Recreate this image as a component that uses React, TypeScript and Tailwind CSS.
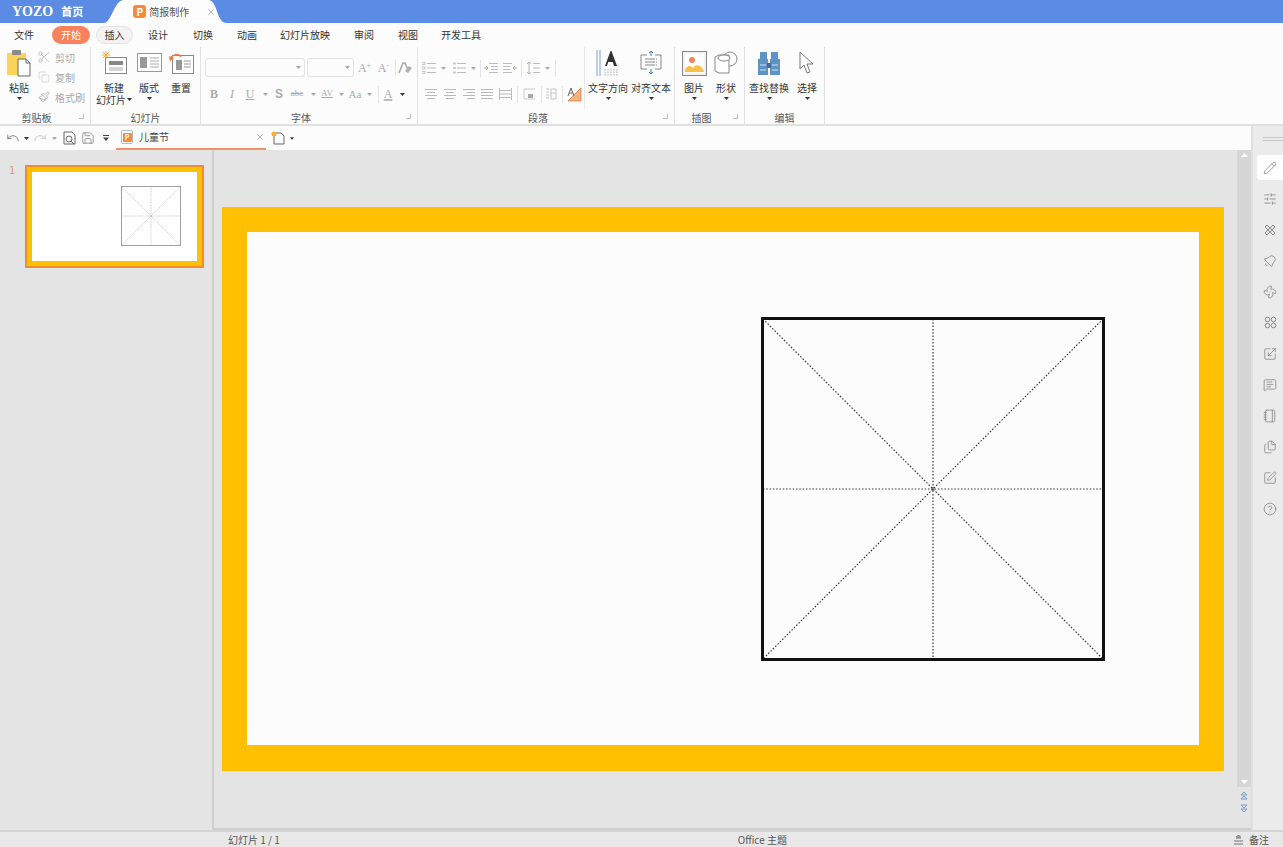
import React from "react";
import {
  Pencil, SlidersHorizontal, Fan, MessageSquareText, Files, SquarePen, CircleHelp, Scissors, Copy, Paintbrush, X, Undo, Redo, Save, Bell, Scaling, Notebook,
} from "lucide-react";

const Caret = ({ className = "" }: { className?: string }) => (
  <svg width="5" height="3" viewBox="0 0 5 3" className={className}><path d="M0 0h5L2.5 3z" fill="#333" /></svg>
);
const GrayCaret = () => (
  <svg width="5" height="3" viewBox="0 0 5 3"><path d="M0 0h5L2.5 3z" fill="#aaa" /></svg>
);

const Launcher = () => (
  <svg width="5" height="5" viewBox="0 0 5 5" className="absolute right-[6px] bottom-[5px]"><path d="M4.5 0v4.5H0" stroke="#bbb" fill="none" /></svg>
);

const Lines = ({ rows, w = 12 }: { rows: [number, number][]; w?: number }) => (
  <svg width={w} height="12" viewBox={`0 0 ${w} 12`}>
    {rows.map(([a, b], i) => (
      <path key={i} d={`M${a} ${1.5 + (i * 9) / (rows.length - 1)}H${b}`} stroke="#b8b8b8" />
    ))}
  </svg>
);

const PBadge = ({ size }: { size: "s" | "l" }) =>
  size === "l" ? (
    <div className="flex h-[13px] w-[13px] items-center justify-center rounded-[3px] bg-[#f58a3c] text-[10px] font-bold leading-none text-white">P</div>
  ) : (
    <div className="flex h-[14px] w-[12px] items-center justify-center rounded-[2px] border border-[#bbb] bg-white">
      <div className="flex h-[9px] w-[9px] items-center justify-center rounded-[1px] bg-[#f58a3c] text-[7px] font-bold leading-none text-white">P</div>
    </div>
  );

const tabs = [
  { t: "文件", c: "ml-[4px] w-[40px]" },
  { t: "开始", c: "ml-[8px] w-[38px] h-[18px] rounded-full bg-[#f9825c] text-white" },
  { t: "插入", c: "ml-[6px] w-[37px] h-[18px] rounded-full border border-[#e4e4e4] bg-[#f3f3f3]" },
  { t: "设计", c: "ml-[5px] w-[40px]" },
  { t: "切换", c: "ml-[5px] w-[40px]" },
  { t: "动画", c: "ml-[4px] w-[40px]" },
  { t: "幻灯片放映", c: "ml-[8px] w-[60px]" },
  { t: "审阅", c: "ml-[9px] w-[40px]" },
  { t: "视图", c: "ml-[4px] w-[40px]" },
  { t: "开发工具", c: "ml-[8px] w-[50px]" },
];

const Group = ({ label, className, labelClass = "", children, launcher }: { label: string; className: string; labelClass?: string; children: React.ReactNode; launcher?: boolean }) => (
  <div className={`relative flex h-full shrink-0 flex-col border-r border-[#e2e2e2] ${className}`}>
    <div className="flex h-[64px] items-start">{children}</div>
    <div className={`text-center text-[10px] leading-[13px] text-[#555] ${labelClass}`}>{label}</div>
    {launcher && <Launcher />}
  </div>
);

const Big = ({ icon, label, label2, caret = true, className }: { icon: React.ReactNode; label: string; label2?: React.ReactNode; caret?: boolean; className: string }) => (
  <div className={`flex shrink-0 flex-col items-center ${className}`}>
    <div className="flex h-[32px] items-center justify-center">{icon}</div>
    <div className="mt-[3px] whitespace-nowrap text-[10px] leading-[12px] text-[#333]">{label}</div>
    {label2 ? (
      <div className="whitespace-nowrap text-[10px] leading-[11px] text-[#333]">{label2}</div>
    ) : caret ? (
      <Caret className="mt-[3px]" />
    ) : null}
  </div>
);

const SmallTool = ({ icon, label }: { icon: React.ReactNode; label: string }) => (
  <div className="flex h-[20px] items-center text-[10px] text-[#aaa]">
    <span className="flex w-[20px] justify-center">{icon}</span>
    <span className="ml-[1px] whitespace-nowrap">{label}</span>
  </div>
);

const Slot = ({ w, children }: { w: string; children: React.ReactNode }) => (
  <div className={`flex shrink-0 items-center justify-center ${w}`}>{children}</div>
);
const VSep = () => <div className="h-[17px] w-px bg-[#e4e4e4]" />;

const Mi = ({ c = "", children }: { c?: string; children: React.ReactNode }) => (
  <span className={`font-['Liberation_Serif',serif] text-[#aaa] ${c}`}>{children}</span>
);

const PasteIcon = () => (
  <svg width="26" height="28" viewBox="0 0 26 28">
    <rect x="1" y="4" width="19" height="22" rx="1" fill="#fbd25a" />
    <rect x="6" y="1" width="9" height="5" rx="1" fill="#8a8a8a" />
    <path d="M12 10h8l4 4v13H12z" fill="#fff" stroke="#666" />
    <path d="M20 10v4h4" fill="none" stroke="#666" />
  </svg>
);
const NewSlideIcon = () => (
  <svg width="27" height="24" viewBox="0 0 27 24">
    <rect x="4.5" y="6.5" width="21" height="16" fill="#fff" stroke="#888" />
    <rect x="8" y="10" width="14" height="4" fill="#888" />
    <path d="M8 17h14M8 19h14" stroke="#aaa" />
    <path d="M5 0v8M1 4h8M2 1l6 6M8 1L2 7" stroke="#f3b14a" />
  </svg>
);
const LayoutIcon = () => (
  <svg width="25" height="20" viewBox="0 0 25 20">
    <rect x=".5" y=".5" width="24" height="18" fill="#fff" stroke="#999" />
    <rect x="3" y="4" width="7" height="11" fill="#999" />
    <path d="M13 5h9M13 8h9M13 11h9M13 14h9" stroke="#aaa" />
  </svg>
);
const ResetIcon = () => (
  <svg width="25" height="22" viewBox="0 0 25 22">
    <rect x="3.5" y="3.5" width="21" height="18" fill="#fff" stroke="#888" />
    <rect x="7" y="8" width="6" height="10" fill="#999" />
    <path d="M15 9h7M15 12h7M15 15h7" stroke="#999" />
    <path d="M1 8C3 2 10 1 12 5" stroke="#f0784a" strokeWidth="1.6" fill="none" />
    <path d="M0 4l1 5 4-3z" fill="#f0784a" />
  </svg>
);
const TextDirIcon = () => (
  <svg width="24" height="26" viewBox="0 0 24 26">
    <path d="M1 0v26M4 0v26" stroke="#7fa0c4" />
    <path d="M9 16L14.5 1h1L21 16h-3l-1.2-4h-4.6L11 16z" fill="#333" />
    <path d="M9 19v7M12 19v7M15 19v7M18 19v7M21 19v7" stroke="#aaa" strokeDasharray="1.5 1" />
  </svg>
);
const AlignTextIcon = () => (
  <svg width="22" height="24" viewBox="0 0 22 24">
    <path d="M7 4H1v14h6M15 4h6v14h-6" stroke="#888" fill="none" />
    <path d="M5 8h12M5 11h12M5 14h12" stroke="#888" strokeDasharray="10 1 1" />
    <path d="M11 0v5M11 18v5M9 2l2-2 2 2M9 21l2 2 2-2" stroke="#3a7cb8" fill="none" />
  </svg>
);
const PictureIcon = () => (
  <svg width="25" height="25" viewBox="0 0 25 25">
    <rect x=".5" y=".5" width="24" height="24" fill="#f2f2f2" stroke="#888" />
    <rect x="3" y="3" width="19" height="19" fill="#fff" />
    <circle cx="10" cy="9" r="3" fill="#f5845a" />
    <path d="M3 20c1-6 6-6 8-3 2-4 8-4 11 3v1H3z" fill="#f7c04a" />
  </svg>
);
const ShapeIcon = () => (
  <svg width="24" height="24" viewBox="0 0 24 24">
    <circle cx="16" cy="8" r="7" fill="#fff" stroke="#888" />
    <path d="M1 6l4-2h10v18H5l-4-2z" fill="#fff" stroke="#888" />
    <ellipse cx="10" cy="7" rx="6" ry="3" fill="#fff" stroke="#888" />
  </svg>
);
const FindIcon = () => (
  <svg width="24" height="25" viewBox="0 0 24 25">
    <rect x="3" y="1" width="7" height="7" fill="#5f93c4" />
    <rect x="14" y="1" width="7" height="7" fill="#5f93c4" />
    <rect x="1" y="8" width="10" height="16" fill="#5f93c4" />
    <rect x="13" y="8" width="10" height="16" fill="#5f93c4" />
    <rect x="10" y="12" width="4" height="5" fill="#3e6e9e" />
    <path d="M3 14h6M15 14h6M3 19h6M15 19h6" stroke="#cfe0f0" />
  </svg>
);
const CursorIcon = () => (
  <svg width="16" height="24" viewBox="0 0 16 24">
    <path d="M1 1v17l4-4 3 8 3-1-3-8h6z" fill="#fff" stroke="#777" />
  </svg>
);
const ListIcon = ({ num }: { num?: boolean }) => (
  <svg width="14" height="12" viewBox="0 0 14 12">
    {[1.5, 6, 10.5].map((y) => (
      <g key={y}>
        <rect x={num ? 1 : 0} y={y - 1} width="3" height="2" fill={num ? "#ccc" : "none"} stroke="#bbb" strokeWidth={num ? 0 : 0.8} />
        <path d={`M5 ${y}H14`} stroke="#bbb" />
      </g>
    ))}
  </svg>
);
const IndentIcon = ({ flip }: { flip?: boolean }) => (
  <svg width="14" height="12" viewBox="0 0 14 12" className={flip ? "-scale-x-100" : ""}>
    <path d="M5 1.5h9M7 4.5h7M7 7.5h7M5 10.5h9" stroke="#bbb" />
    <path d="M0 6h4M2 4l2 2-2 2" stroke="#b5a98c" fill="none" />
  </svg>
);
const LineSpaceIcon = () => (
  <svg width="14" height="14" viewBox="0 0 14 14">
    <path d="M3 1v12M1 3l2-2 2 2M1 11l2 2 2-2" stroke="#b5b5b5" fill="none" />
    <path d="M7 2.5h7M7 7h7M7 11.5h7" stroke="#bbb" />
  </svg>
);

const CrossTool = () => (
  <svg width="14" height="14" viewBox="0 0 14 14">
    <path d="M2 4L4 2l8 8-2 2zM10 2l2 2-8 8-2-2z" fill="none" stroke="#888" />
  </svg>
);
const FourDots = () => (
  <svg width="13" height="13" viewBox="0 0 13 13">
    {[[3.5, 3.5], [9.5, 3.5], [3.5, 9.5], [9.5, 9.5]].map(([x, y]) => (
      <circle key={`${x}${y}`} cx={x} cy={y} r="2.3" fill="none" stroke="#888" />
    ))}
  </svg>
);
const DoubleChev = ({ flip }: { flip?: boolean }) => (
  <svg width="8" height="9" viewBox="0 0 8 9" className={flip ? "-scale-y-100" : ""}>
    <path d="M1 4l3-3 3 3zM1 8l3-3 3 3z" fill="none" stroke="#6f9ad0" />
  </svg>
);

const sideIcon = "h-[14px] w-[14px] text-[#888]";
const side: React.ReactNode[] = [
  <SlidersHorizontal className={sideIcon} strokeWidth={1.4} />,
  <CrossTool />,
  <Bell className={`${sideIcon} rotate-45`} strokeWidth={1.4} />,
  <Fan className={sideIcon} strokeWidth={1.4} />,
  <FourDots />,
  <Scaling className={sideIcon} strokeWidth={1.4} />,
  <MessageSquareText className={sideIcon} strokeWidth={1.4} />,
  <Notebook className={sideIcon} strokeWidth={1.4} />,
  <Files className={sideIcon} strokeWidth={1.4} />,
  <SquarePen className={sideIcon} strokeWidth={1.4} />,
  <CircleHelp className={sideIcon} strokeWidth={1.4} />,
];

const MiGrid = ({ size, stroke, dash, line, frame }: { size: number; stroke: number; dash: string; line: string; frame: string }) => (
  <svg width={size} height={size} viewBox="0 0 344 344" className="block">
    <g stroke={line} strokeWidth={size > 100 ? 1.2 : 3} strokeDasharray={dash} fill="none">
      <path d="M2 2L342 342M342 2L2 342M172 2V342M2 172H342" />
    </g>
    <rect x={stroke / 2} y={stroke / 2} width={344 - stroke} height={344 - stroke} fill="none" stroke={frame} strokeWidth={stroke} />
  </svg>
);

export default function App() {
  return (
    <div className="flex h-[847px] w-[1283px] flex-col overflow-hidden bg-[#e4e4e4] font-['Noto_Sans_CJK_SC','Liberation_Sans',sans-serif] text-[10px] text-[#333]">
      {/* Title bar */}
      <div className="relative flex h-[23px] shrink-0 items-center bg-[#5b8be2] text-white">
        <span className="ml-[12px] font-['Liberation_Serif',serif] text-[14px] font-bold leading-none">YOZO</span>
        <span className="ml-[8px] text-[11px] font-bold leading-none">首页</span>
        <div className="relative ml-[21px] flex h-[23px] w-[122px] items-center">
          <svg width="122" height="23" viewBox="0 0 122 23" className="absolute left-0 top-0">
            <path d="M0 23C8 22 10 0 20 0H104C114 0 112 22 122 23Z" fill="#fdfdfd" />
          </svg>
          <div className="relative ml-[29px] flex items-center text-[#555]">
            <PBadge size="l" />
            <span className="ml-[3px] text-[10px] leading-none">简报制作</span>
            <X className="ml-[17px] h-[10px] w-[10px] text-[#777]" strokeWidth={1.3} />
          </div>
        </div>
      </div>

      {/* Menu */}
      <div className="flex h-[24px] shrink-0 items-center bg-[#fcfcfc]">
        {tabs.map((t) => (
          <div key={t.t} className={`flex shrink-0 items-center justify-center leading-none ${t.c}`}>{t.t}</div>
        ))}
      </div>

      {/* Ribbon */}
      <div className="flex h-[79px] shrink-0 border-b-2 border-[#e0e0e0] bg-[#fcfcfc]">
        <Group label="剪贴板" className="w-[91px]" labelClass="pr-[17px]" launcher>
          <Big icon={<PasteIcon />} label="粘贴" className="ml-[6px] w-[26px]" />
          <div className="ml-[2px] flex flex-col">
            <SmallTool icon={<Scissors className="h-[14px] w-[14px] text-[#aaa]" strokeWidth={1.2} />} label="剪切" />
            <SmallTool icon={<Copy className="h-[12px] w-[12px] text-[#c4c4c4]" strokeWidth={1.2} />} label="复制" />
            <SmallTool icon={<Paintbrush className="h-[12px] w-[12px] text-[#aaa]" strokeWidth={1.6} />} label="格式刷" />
          </div>
        </Group>
        <Group label="幻灯片" className="w-[110px]">
          <Big icon={<NewSlideIcon />} label="新建" label2={<span className="flex items-center">幻灯片<Caret className="ml-[1px]" /></span>} className="ml-[7px] w-[32px]" />
          <Big icon={<LayoutIcon />} label="版式" className="ml-[3px] w-[32px]" />
          <Big icon={<ResetIcon />} label="重置" caret={false} className="w-[32px]" />
        </Group>
        <Group label="字体" className="w-[217px]" labelClass="pr-[16px]" launcher>
          <div className="ml-[4px] mt-[11px] flex flex-col">
            <div className="flex h-[19px] items-center">
              <div className="flex h-[19px] w-[100px] items-center justify-end rounded-[3px] border border-[#e2e2e2] pr-[3px]"><GrayCaret /></div>
              <div className="ml-[2px] flex h-[19px] w-[47px] items-center justify-end rounded-[3px] border border-[#e2e2e2] pr-[3px]"><GrayCaret /></div>
              <Slot w="w-[19px] ml-[1px]"><Mi c="text-[12px]">A<sup className="text-[8px]">+</sup></Mi></Slot>
              <Slot w="w-[19px]"><Mi c="text-[12px]">A<sup className="text-[8px]">-</sup></Mi></Slot>
              <Slot w="w-[4px]"><VSep /></Slot>
              <Slot w="w-[16px]">
                <svg width="14" height="12" viewBox="0 0 14 12"><path d="M1 11L5 1h2l3 7" stroke="#aaa" strokeWidth="1.6" fill="none" /><path d="M7 9l4-5 3 2-4 5z" fill="#b0b0b0" /></svg>
              </Slot>
            </div>
            <div className="mt-[8px] flex h-[18px] items-center text-[12px]">
              <Slot w="w-[18px]"><Mi c="font-bold">B</Mi></Slot>
              <Slot w="w-[18px]"><Mi c="italic">I</Mi></Slot>
              <Slot w="w-[18px]"><Mi c="underline">U</Mi></Slot>
              <Slot w="w-[12px]"><GrayCaret /></Slot>
              <Slot w="w-[16px]"><span className="font-['Liberation_Sans',sans-serif] font-bold text-[#aaa]">S</span></Slot>
              <Slot w="w-[20px]"><Mi c="text-[9px] line-through">abc</Mi></Slot>
              <Slot w="w-[12px]"><GrayCaret /></Slot>
              <Slot w="w-[16px]"><Mi c="text-[9px] underline">AV</Mi></Slot>
              <Slot w="w-[12px]"><GrayCaret /></Slot>
              <Slot w="w-[16px]"><Mi c="text-[11px]">Aa</Mi></Slot>
              <Slot w="w-[12px]"><GrayCaret /></Slot>
              <Slot w="w-[6px]"><VSep /></Slot>
              <Slot w="w-[14px]"><Mi c="underline decoration-[#bbb] decoration-2">A</Mi></Slot>
              <Slot w="w-[14px]"><Caret /></Slot>
            </div>
          </div>
        </Group>
        <Group label="段落" className="w-[257px]" labelClass="pr-[16px]" launcher>
          <div className="flex h-[62px] w-[167px] shrink-0 flex-col border-r border-[#e8e8e8] pl-[4px]">
            <div className="mt-[12px] flex h-[18px] items-center">
              <Slot w="w-[14px]"><ListIcon /></Slot>
              <Slot w="w-[14px]"><GrayCaret /></Slot>
              <Slot w="w-[17px]"><ListIcon num /></Slot>
              <Slot w="w-[12px]"><GrayCaret /></Slot>
              <Slot w="w-[3px]"><VSep /></Slot>
              <Slot w="w-[18px]"><IndentIcon /></Slot>
              <Slot w="w-[20px]"><IndentIcon flip /></Slot>
              <Slot w="w-[3px]"><VSep /></Slot>
              <Slot w="w-[20px]"><LineSpaceIcon /></Slot>
              <Slot w="w-[8px]"><GrayCaret /></Slot>
              <Slot w="w-[8px]"><VSep /></Slot>
            </div>
            <div className="mt-[8px] flex h-[18px] items-center">
              <Slot w="w-[18px]"><Lines rows={[[0, 12], [2, 10], [0, 12], [2, 10]]} /></Slot>
              <Slot w="w-[19px]"><Lines rows={[[0, 12], [2, 10], [0, 12], [2, 10]]} /></Slot>
              <Slot w="w-[19px]"><Lines rows={[[0, 12], [4, 12], [0, 12], [4, 12]]} /></Slot>
              <Slot w="w-[18px]"><Lines rows={[[0, 12], [0, 12], [0, 12], [0, 12]]} /></Slot>
              <Slot w="w-[19px]">
                <svg width="13" height="12" viewBox="0 0 13 12"><path d="M.5 0v12M12.5 0v12M0 2.5h13M0 6h13M0 9.5h13" stroke="#bbb" /></svg>
              </Slot>
              <Slot w="w-[5px]"><VSep /></Slot>
              <Slot w="w-[18px]">
                <svg width="13" height="12" viewBox="0 0 13 12"><path d="M1 1h11M1 11h11M1 1v10" stroke="#ccc" /><rect x="5" y="6" width="5" height="4" fill="#aaa" /></svg>
              </Slot>
              <Slot w="w-[6px]"><VSep /></Slot>
              <Slot w="w-[14px]">
                <svg width="12" height="12" viewBox="0 0 12 12"><path d="M1 1h3M1 4h3M1 7h3M1 10h3M6 1h5v10H6zM6 5h5" stroke="#c4c4c4" fill="none" /></svg>
              </Slot>
              <Slot w="w-[9px]"><VSep /></Slot>
              <Slot w="w-[15px]">
                <svg width="15" height="15" viewBox="0 0 15 15"><path d="M1 14L14 1v13z" fill="#f4b183" stroke="#c97a3c" strokeWidth=".7" /><path d="M1 9l3-8 3 8M2.2 6h3.6" stroke="#666" fill="none" /></svg>
              </Slot>
            </div>
          </div>
          <Big icon={<TextDirIcon />} label="文字方向" className="ml-[3px] w-[40px]" />
          <Big icon={<AlignTextIcon />} label="对齐文本" className="ml-[3px] w-[40px]" />
        </Group>
        <Group label="插图" className="w-[70px]" labelClass="pr-[16px]" launcher>
          <Big icon={<PictureIcon />} label="图片" className="ml-[3px] w-[32px]" />
          <Big icon={<ShapeIcon />} label="形状" className="w-[32px]" />
        </Group>
        <Group label="编辑" className="w-[80px]">
          <Big icon={<FindIcon />} label="查找替换" className="ml-[4px] w-[40px]" />
          <Big icon={<CursorIcon />} label="选择" className="ml-[2px] w-[32px]" />
        </Group>
      </div>

      {/* Body */}
      <div className="flex min-h-0 flex-1">
        <div className="flex w-[1251px] shrink-0 flex-col">
          {/* Quick bar */}
          <div className="flex h-[24px] shrink-0 items-center bg-[#fcfcfc]">
            <Slot w="w-[20px] ml-[3px]"><Undo className="h-[14px] w-[14px] text-[#666]" strokeWidth={1.3} /></Slot>
            <Slot w="w-[7px]"><Caret /></Slot>
            <Slot w="w-[20px]"><Redo className="h-[14px] w-[14px] text-[#bbb]" strokeWidth={1.3} /></Slot>
            <Slot w="w-[9px]"><GrayCaret /></Slot>
            <Slot w="w-[20px]">
              <svg width="13" height="14" viewBox="0 0 13 14"><path d="M1 1h8l3 3v9H1z" fill="#fff" stroke="#666" /><circle cx="6" cy="8" r="3" fill="none" stroke="#666" /><path d="M8 10l3 3" stroke="#666" /></svg>
            </Slot>
            <Slot w="w-[18px]"><Save className="h-[14px] w-[14px] text-[#777]" strokeWidth={1.2} /></Slot>
            <Slot w="w-[18px]">
              <svg width="6" height="6" viewBox="0 0 6 6"><path d="M0 .5h6" stroke="#444" /><path d="M0 2.5h6L3 6z" fill="#444" /></svg>
            </Slot>
            <div className="ml-[1px] flex h-[24px] w-[150px] items-center border-b-2 border-[#f0906c] pl-[5px]">
              <PBadge size="s" />
              <span className="ml-[6px] text-[10px] leading-none text-[#444]">儿童节</span>
              <X className="ml-[86px] h-[10px] w-[10px] text-[#777]" strokeWidth={1.3} />
            </div>
            <Slot w="w-[24px]">
              <svg width="14" height="14" viewBox="0 0 14 14"><path d="M3 2h7l3 3v8H3z" fill="#fff" stroke="#666" /><circle cx="3" cy="3" r="2.5" fill="#f0b43c" /></svg>
            </Slot>
            <Slot w="w-[4px]"><Caret /></Slot>
          </div>
          {/* Main */}
          <div className="flex min-h-0 flex-1">
            <div className="flex w-[214px] shrink-0 border-r-2 border-[#cfcfcf] pl-[9px] pt-[15px]">
              <span className="w-[16px] text-[11px] leading-[8px] text-[#dd9b5e]">1</span>
              <div className="h-[103px] w-[179px] border-2 border-[#f08c2c] bg-[#ffc000] p-[5px]">
                <div className="h-[89px] w-[165px] bg-white pl-[89px] pt-[14px]">
                  <MiGrid size={60} stroke={4} dash="5 4" line="#999" frame="#777" />
                </div>
              </div>
            </div>
            <div className="flex min-w-0 flex-1 flex-col">
              <div className="flex min-h-0 flex-1">
                <div className="min-w-0 flex-1 pl-[8px] pt-[57px]">
                  <div className="h-[564px] w-[1002px] bg-[#ffc000] px-[25px] pt-[25px]">
                    <div className="h-[513px] w-[952px] bg-[#fcfcfc] pl-[514px] pt-[85px]">
                      <MiGrid size={344} stroke={3} dash="1.5 1.8" line="#333" frame="#111" />
                    </div>
                  </div>
                </div>
                <div className="flex w-[14px] shrink-0 flex-col items-center">
                  <div className="flex h-[637px] w-full flex-col items-center justify-between bg-[#d6d6d6] py-[3px]">
                    <svg width="7" height="4" viewBox="0 0 7 4"><path d="M0 4h7L3.5 0z" fill="#fff" /></svg>
                    <svg width="7" height="4" viewBox="0 0 7 4"><path d="M0 0h7L3.5 4z" fill="#fff" /></svg>
                  </div>
                  <div className="mt-[4px] flex flex-col items-center">
                    <DoubleChev />
                    <div className="mt-[4px]"><DoubleChev flip /></div>
                  </div>
                </div>
              </div>
              <div className="h-[2px] shrink-0 bg-[#cfcfcf]" />
            </div>
          </div>
        </div>
        {/* Right sidebar */}
        <div className="flex min-w-0 flex-1 flex-col border-l-2 border-[#e0e0e0] bg-[#ebebeb] pl-[4px]">
          <div className="ml-[6px] mt-[11px] h-[4px] border-y border-[#c8c8c8]" />
          <div className="mt-[14px] flex h-[25px] items-center justify-center rounded-l-[3px] bg-white">
            <Pencil className="h-[14px] w-[14px] text-[#888]" strokeWidth={1.4} />
          </div>
          <div className="mt-[3px] flex flex-col">
            {side.map((n, i) => (
              <div key={i} className="flex h-[31px] items-center justify-center">{n}</div>
            ))}
          </div>
        </div>
      </div>

      {/* Status */}
      <div className="flex h-[17px] shrink-0 items-center border-t-2 border-[#d4d4d4] bg-[#e8e8e8] text-[#555]">
        <span className="ml-[228px] text-[10px] leading-none">幻灯片 1 / 1</span>
        <span className="ml-[458px] text-[10px] leading-none">Office 主题</span>
        <svg width="11" height="10" viewBox="0 0 11 10" className="ml-[446px]"><path d="M1 9h9M1 6h9M3 3h5M5.5 0l2 2h-4z" stroke="#666" fill="none" strokeWidth=".9" /></svg>
        <span className="ml-[5px] text-[10px] leading-none">备注</span>
      </div>
    </div>
  );
}
